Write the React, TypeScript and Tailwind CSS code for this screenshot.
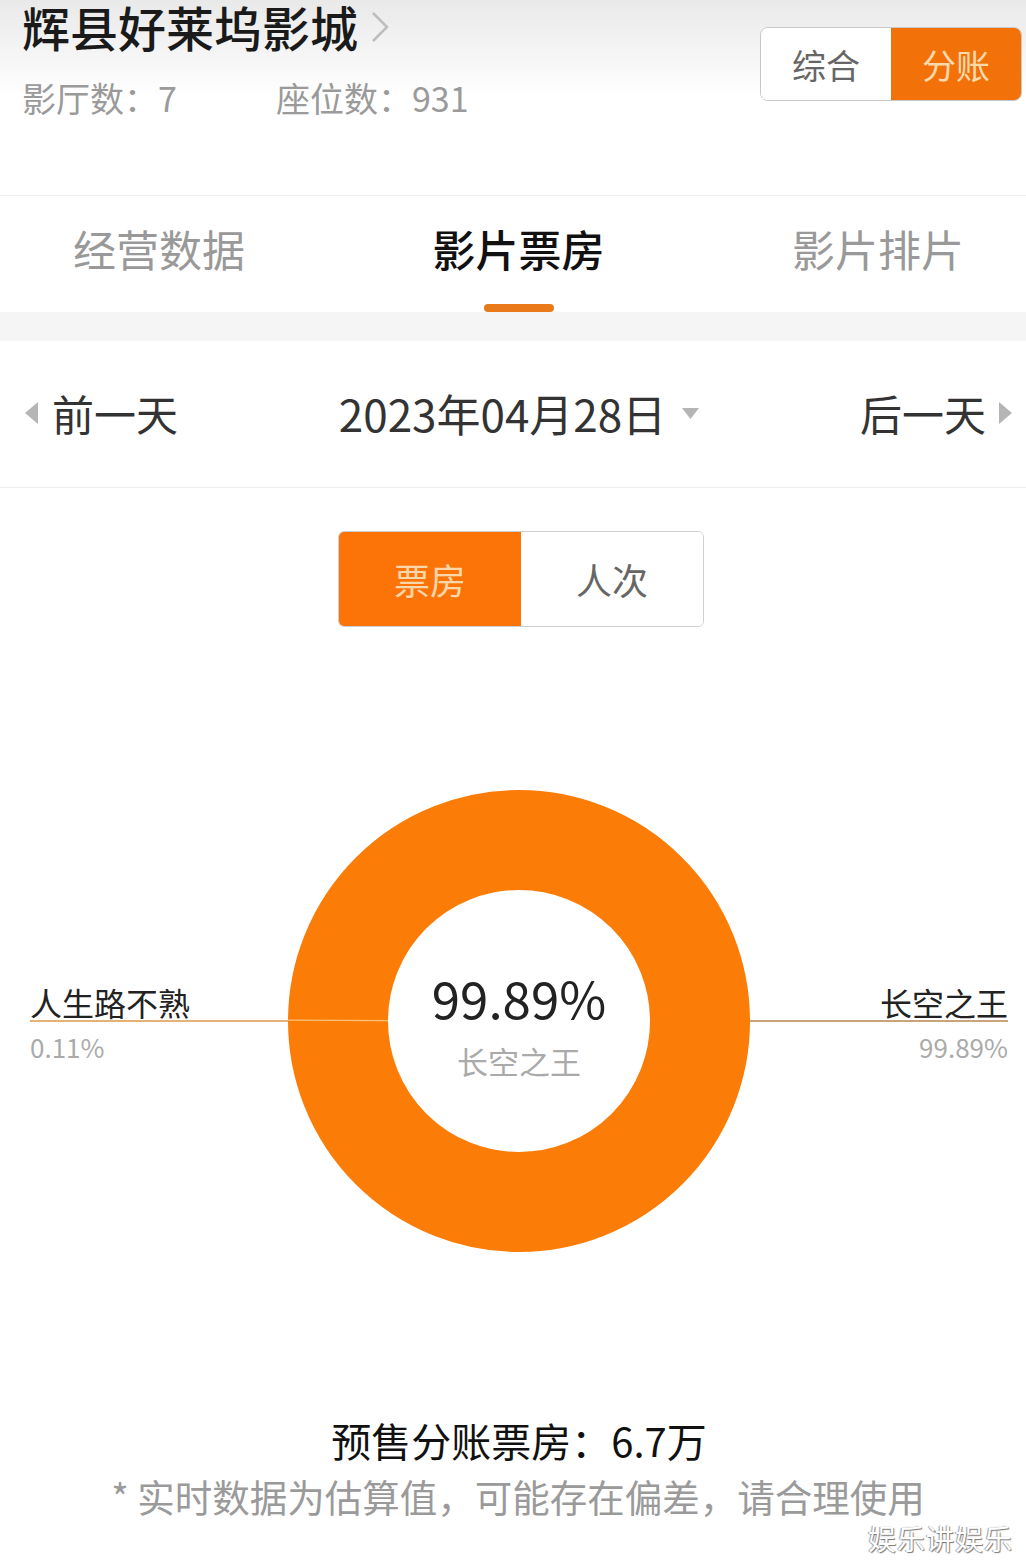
const font = { fontFamily: '"Noto Sans CJK SC", "Noto Sans", sans-serif' };

function TriangleLeft() {
  return (
    <svg width="13" height="22" viewBox="0 0 13 22" className="shrink-0">
      <path d="M13 0 L0 11 L13 22 Z" fill="#b5b5b5" />
    </svg>
  );
}

function TriangleRight() {
  return (
    <svg width="13" height="22" viewBox="0 0 13 22" className="shrink-0">
      <path d="M0 0 L13 11 L0 22 Z" fill="#b5b5b5" />
    </svg>
  );
}

function Donut() {
  const r = 181;
  const c = 2 * Math.PI * r;
  const minor = 0.0011 * c;
  return (
    <div className="relative w-[462px] h-[462px] shrink-0">
      <svg width="462" height="462" viewBox="0 0 462 462" className="absolute inset-0">
        <circle cx="231" cy="231" r={r} fill="none" stroke="#fb7d07" strokeWidth="100" />
        <circle
          cx="231"
          cy="231"
          r={r}
          fill="none"
          stroke="#f9c27a"
          strokeWidth="100"
          strokeDasharray={`${minor} ${c}`}
          transform="rotate(180 231 231)"
        />
      </svg>
      <div className="absolute inset-0 flex flex-col items-center justify-center pt-[6px]">
        <div className="text-[51px] leading-none text-[#222]">99.89%</div>
        <div className="text-[31px] leading-none text-[#aaa] mt-[22px]">长空之王</div>
      </div>
    </div>
  );
}

export default function App() {
  return (
    <div className="relative w-[1026px] h-[1568px] bg-white overflow-hidden" style={font}>
      {/* Header */}
      <div className="h-[195px] bg-gradient-to-b from-[#e9e9e9] via-white to-white flex justify-between">
        <div className="pl-[22px]">
          <div className="flex items-center">
            <span className="text-[48px] leading-[52px] font-medium text-[#1a1a1a]">
              辉县好莱坞影城
            </span>
            <svg width="20" height="32" viewBox="0 0 20 32" className="ml-[12px] mt-[2px]">
              <path d="M3 2 L17 16 L3 30" fill="none" stroke="#bdbdbd" strokeWidth="2.5" />
            </svg>
          </div>
          <div className="flex mt-[29px] text-[34px] leading-none text-[#9a9a9a]">
            <span className="w-[254px]">影厅数：7</span>
            <span>座位数：931</span>
          </div>
        </div>
        <div className="mt-[27px] mr-[4px] flex h-[74px] w-[262px] rounded-[8px] border border-[#c8c8c8] overflow-hidden">
          <div className="flex-1 flex items-center justify-center bg-white text-[34px] text-[#666]">综合</div>
          <div className="flex-1 flex items-center justify-center bg-[#f27109] text-[34px] text-[#fbd9ad]">分账</div>
        </div>
      </div>
      <div className="h-px bg-[#eeeeee]" />

      {/* Tabs */}
      <div className="h-[116px] flex justify-between pl-[73px] pr-[62px]">
        <div className="mt-[31px] text-[43px] leading-none text-[#999]">经营数据</div>
        <div className="mt-[31px] flex flex-col items-center">
          <div className="text-[43px] leading-none font-medium text-[#111]">影片票房</div>
          <div className="mt-[34px] w-[70px] h-[8px] rounded-full bg-[#ea7a19]" />
        </div>
        <div className="mt-[31px] text-[43px] leading-none text-[#999]">影片排片</div>
      </div>
      <div className="h-[29px] bg-[#f5f5f5]" />

      {/* Date row */}
      <div className="h-[146px] flex items-center justify-between pl-[25px] pr-[14px] pb-[2px]">
        <div className="flex items-center gap-[14px]">
          <TriangleLeft />
          <span className="text-[42px] leading-none text-[#333]">前一天</span>
        </div>
        <div className="flex items-center gap-[16px]">
          <span className="text-[44px] leading-none text-[#333]">2023年04月28日</span>
          <svg width="17" height="11" viewBox="0 0 17 11">
            <path d="M0 0 L17 0 L8.5 11 Z" fill="#b5b5b5" />
          </svg>
        </div>
        <div className="flex items-center gap-[13px]">
          <span className="text-[42px] leading-none text-[#333]">后一天</span>
          <TriangleRight />
        </div>
      </div>
      <div className="h-px bg-[#eeeeee]" />

      {/* Segment */}
      <div className="mt-[43px] ml-[338px] flex w-[366px] h-[96px] rounded-[6px] border border-[#cfcfcf] overflow-hidden">
        <div className="flex-1 flex items-center justify-center bg-[#fc7408] text-[36px] text-[#f9d7aa]">票房</div>
        <div className="flex-1 flex items-center justify-center bg-white text-[36px] text-[#666]">人次</div>
      </div>

      {/* Chart */}
      <div className="mt-[163px] flex items-center pl-[30px] pr-[18px]">
        <div className="flex-1 flex flex-col">
          <div className="h-[44px] flex items-end pb-[2px] text-[32px] leading-none text-[#222]">人生路不熟</div>
          <div className="h-[2px] bg-[#e3b274]" />
          <div className="h-[44px] pt-[12px] text-[26px] leading-none text-[#aaa]">0.11%</div>
        </div>
        <Donut />
        <div className="flex-1 flex flex-col items-end">
          <div className="h-[44px] flex items-end pb-[2px] text-[32px] leading-none text-[#222]">长空之王</div>
          <div className="h-[2px] w-full bg-[#c9a37a]" />
          <div className="h-[44px] pt-[12px] text-[26px] leading-none text-[#aaa]">99.89%</div>
        </div>
      </div>

      {/* Footer */}
      <div className="mt-[164px] text-center text-[40px] leading-[48px] text-[#111] pl-[12px]">
        预售分账票房：6.7万
      </div>
      <div className="mt-[10px] text-center text-[37.5px] leading-[44px] text-[#9a9a9a] pl-[10px]">
        * 实时数据为估算值，可能存在偏差，请合理使用
      </div>

      <div className="absolute left-[868px] top-[1524px] text-[28px] leading-none text-white tracking-[1px] [text-shadow:1px_1px_1px_#777,-1px_0_1px_#999]">
        娱乐讲娱乐
      </div>
    </div>
  );
}
